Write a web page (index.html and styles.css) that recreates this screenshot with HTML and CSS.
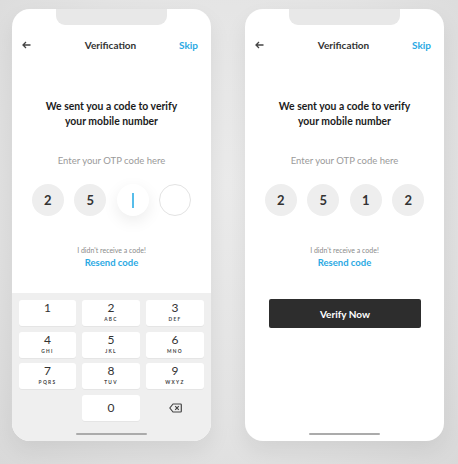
FILE: index.html
```html
<!DOCTYPE html>
<html>
<head>
<meta charset="utf-8">
<link rel="stylesheet" href="styles.css">
</head>
<body>
<div class="stage">
  <div class="phone">
    <div class="notch"></div>
    <div class="header">
      <svg class="back" width="9" height="8" viewBox="0 0 9 8"><path d="M8.5 4H1.2M4 1L1 4l3 3" fill="none" stroke="#444" stroke-width="1.3"/></svg>
      <span class="title-h">Verification</span>
      <span class="skip">Skip</span>
    </div>
    <div class="heading">We sent you a code to verify<br>your mobile number</div>
    <div class="label">Enter your OTP code here</div>
    <div class="otp">
      <div class="dot filled">2</div>
      <div class="dot filled">5</div>
      <div class="dot active"><span class="cursor"></span></div>
      <div class="dot empty"></div>
    </div>
    <div class="note">I didn't receive a code!</div>
    <div class="resend">Resend code</div>
    <div class="keyboard">
      <div class="keys">
        <div class="key"><span class="d">1</span></div>
        <div class="key"><span class="d">2</span><span class="l">ABC</span></div>
        <div class="key"><span class="d">3</span><span class="l">DEF</span></div>
        <div class="key"><span class="d">4</span><span class="l">GHI</span></div>
        <div class="key"><span class="d">5</span><span class="l">JKL</span></div>
        <div class="key"><span class="d">6</span><span class="l">MNO</span></div>
        <div class="key"><span class="d">7</span><span class="l">PQRS</span></div>
        <div class="key"><span class="d">8</span><span class="l">TUV</span></div>
        <div class="key"><span class="d">9</span><span class="l">WXYZ</span></div>
        <div class="blank"></div>
        <div class="key zero"><span class="d">0</span></div>
        <div class="del">
          <svg width="13" height="10" viewBox="0 0 13 10"><path d="M4 1h7.5a0.8 0.8 0 0 1 .8.8v6.4a0.8 0.8 0 0 1-.8.8H4L0.8 5z" fill="none" stroke="#444" stroke-width="1.2" stroke-linejoin="round"/><path d="M6.2 3.2l3.6 3.6M9.8 3.2L6.2 6.8" stroke="#444" stroke-width="1.2"/></svg>
        </div>
      </div>
      <div class="home"></div>
    </div>
  </div>

  <div class="phone">
    <div class="notch"></div>
    <div class="header">
      <svg class="back" width="9" height="8" viewBox="0 0 9 8"><path d="M8.5 4H1.2M4 1L1 4l3 3" fill="none" stroke="#444" stroke-width="1.3"/></svg>
      <span class="title-h">Verification</span>
      <span class="skip">Skip</span>
    </div>
    <div class="heading">We sent you a code to verify<br>your mobile number</div>
    <div class="label">Enter your OTP code here</div>
    <div class="otp">
      <div class="dot filled">2</div>
      <div class="dot filled">5</div>
      <div class="dot filled">1</div>
      <div class="dot filled">2</div>
    </div>
    <div class="note">I didn't receive a code!</div>
    <div class="resend">Resend code</div>
    <div class="btn">Verify Now</div>
    <div class="spacer"></div>
    <div class="home"></div>
  </div>
</div>
</body>
</html>
```

FILE: styles.css
```css
html, body {
  margin: 0;
  padding: 0;
}
body {
  width: 458px;
  height: 464px;
  background: radial-gradient(ellipse at 50% 40%, #ebebeb 0%, #e3e3e3 60%, #d9d9d9 100%);
  font-family: Lato, "Noto Sans", sans-serif;
  overflow: hidden;
}
.stage {
  display: flex;
  gap: 34px;
  padding: 9px 0 0 12px;
}
.phone {
  width: 199px;
  height: 432px;
  background: #fff;
  border-radius: 18px;
  overflow: hidden;
  display: flex;
  flex-direction: column;
  box-shadow: 0 10px 22px rgba(0, 0, 0, 0.07);
}
.notch {
  align-self: center;
  width: 111px;
  height: 16px;
  background: #e8e8e8;
  border-radius: 0 0 9px 9px;
  flex: none;
}
.header {
  height: 40px;
  display: flex;
  align-items: center;
  justify-content: space-between;
  padding: 0 13px 0 10px;
  flex: none;
}
.back {
  display: block;
}
.title-h {
  font-weight: 700;
  font-size: 10px;
  color: #333;
  margin-left: 11px;
}
.skip {
  font-weight: 700;
  font-size: 10px;
  color: #2aa9e3;
}
.heading {
  margin-top: 34px;
  text-align: center;
  font-weight: 700;
  font-size: 10.4px;
  line-height: 15px;
  color: #1b1b1b;
}
.label {
  margin-top: 25px;
  text-align: center;
  font-size: 9.5px;
  line-height: 14px;
  color: #9a9a9a;
}
.otp {
  margin-top: 16px;
  display: flex;
  justify-content: center;
  gap: 10.5px;
}
.dot {
  width: 32px;
  height: 32px;
  border-radius: 50%;
  display: flex;
  align-items: center;
  justify-content: center;
  font-weight: 700;
  font-size: 13px;
  color: #333;
  box-sizing: border-box;
}
.filled {
  background: #eeeeee;
}
.active {
  background: #fff;
  box-shadow: 0 5px 16px rgba(0, 0, 0, 0.08);
}
.cursor {
  width: 1.5px;
  height: 15px;
  background: #56bdea;
}
.empty {
  background: #fff;
  border: 1.5px solid #e3e3e3;
}
.note {
  margin-top: 29px;
  text-align: center;
  font-size: 7px;
  line-height: 10px;
  color: #8a8a8a;
}
.resend {
  margin-top: 1px;
  text-align: center;
  font-weight: 700;
  font-size: 9.5px;
  line-height: 13px;
  color: #2aa9e3;
}
.keyboard {
  margin-top: auto;
  background: #efefef;
  height: 148px;
  box-sizing: border-box;
  padding: 7px 7px 6px;
  display: flex;
  flex-direction: column;
}
.keys {
  display: grid;
  grid-template-columns: 57px 58px 58px;
  grid-auto-rows: 26px;
  column-gap: 6px;
  row-gap: 5.67px;
  justify-content: space-between;
}
.key {
  background: #fff;
  border-radius: 3px;
  box-shadow: 0 1px 0 rgba(0, 0, 0, 0.04);
  display: flex;
  flex-direction: column;
  align-items: center;
  padding-top: 2px;
  box-sizing: border-box;
}
.key .d {
  font-size: 12px;
  line-height: 12px;
  color: #333;
}
.key .l {
  font-size: 4.8px;
  line-height: 7px;
  font-weight: 700;
  letter-spacing: 1.3px;
  color: #444;
  margin-top: 2px;
}
.key.zero {
  justify-content: center;
  padding-top: 0;
}
.del {
  display: flex;
  align-items: center;
  justify-content: center;
}
.del svg {
  display: block;
}
.home {
  align-self: center;
  width: 71px;
  height: 2px;
  border-radius: 1px;
  background: #ababab;
  margin-top: 12px;
  flex: none;
}
.phone > .home {
  margin: 0 0 6px;
}
.btn {
  margin: 30px 23px 0 24px;
  height: 29px;
  background: #2d2d2d;
  border-radius: 2px;
  display: flex;
  align-items: center;
  justify-content: center;
  color: #fff;
  font-weight: 700;
  font-size: 10px;
}
.spacer {
  flex: 1;
}
```
